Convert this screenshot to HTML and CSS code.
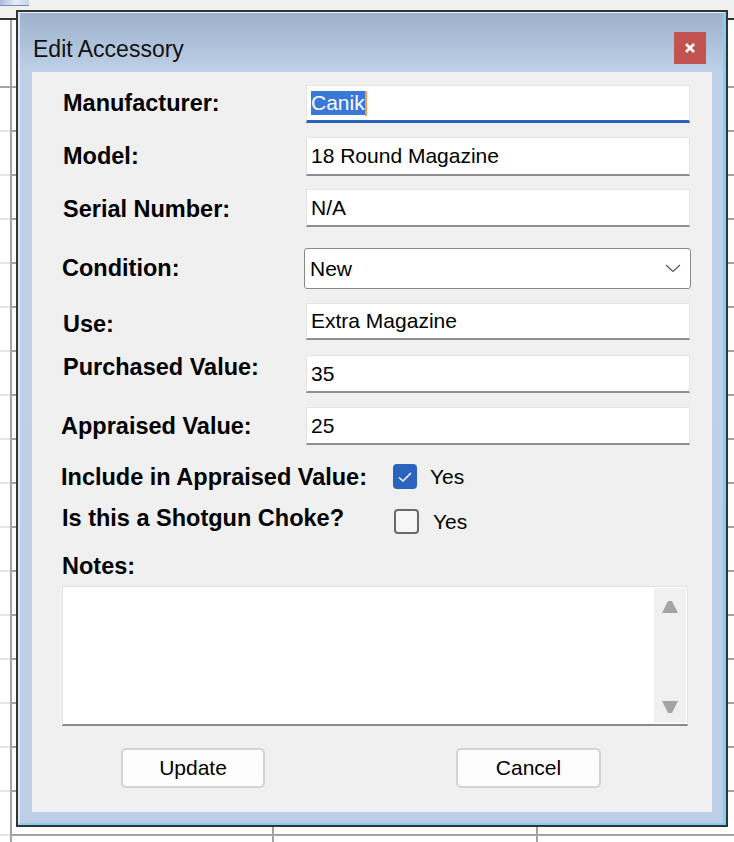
FILE: index.html
```html
<!DOCTYPE html>
<html lang="en">
<head>
    <meta charset="UTF-8">
    <meta name="viewport" content="width=device-width, initial-scale=1.0">
    <title>Edit Accessory</title>
    <link rel="stylesheet" href="styles.css">
</head>
<body>
    <div class="toolbar"><span class="toolbar-icon"></span></div>

    <!-- grid of the accessories list behind the dialog -->
    <div class="sheet">
        <div class="header-row"></div>
        <div class="rows"></div>
    </div>

    <div class="window">
        <div class="frame">
            <div class="titlebar">
                <span class="title">Edit Accessory</span>
                <button class="close" title="Close">
                    <svg width="10" height="10" viewBox="0 0 10 10">
                        <path d="M1 1 L9 9 M9 1 L1 9" stroke="#fff" stroke-width="2.6" fill="none"/>
                    </svg>
                </button>
            </div>

            <div class="client">
                <div class="row r1">
                    <label class="label">Manufacturer:</label>
                    <div class="field focused"><span class="selected">Canik</span><span class="caret"></span></div>
                </div>
                <div class="row r2">
                    <label class="label">Model:</label>
                    <div class="field tall">18 Round Magazine</div>
                </div>
                <div class="row r3">
                    <label class="label">Serial Number:</label>
                    <div class="field">N/A</div>
                </div>
                <div class="row r4">
                    <label class="label">Condition:</label>
                    <div class="combo">
                        <span>New</span>
                        <svg width="16" height="9" viewBox="0 0 16 9">
                            <polyline points="1,1 8,7.5 15,1" stroke="#5a5a5a" stroke-width="1.2" fill="none"/>
                        </svg>
                    </div>
                </div>
                <div class="row r5">
                    <label class="label">Use:</label>
                    <div class="field short">Extra Magazine</div>
                </div>
                <div class="row r6">
                    <label class="label">Purchased Value:</label>
                    <div class="field">35</div>
                </div>
                <div class="row r7">
                    <label class="label">Appraised Value:</label>
                    <div class="field">25</div>
                </div>

                <div class="row check-row r8">
                    <label class="label">Include in Appraised Value:</label>
                    <span class="box checked">
                        <svg width="24" height="25" viewBox="0 0 24 25">
                            <polyline points="6,13.5 10,17 18,9" stroke="#fff" stroke-width="1.6" fill="none"/>
                        </svg>
                    </span>
                    <span class="yes">Yes</span>
                </div>
                <div class="row check-row r9">
                    <label class="label">Is this a Shotgun Choke?</label>
                    <span class="box"></span>
                    <span class="yes">Yes</span>
                </div>

                <label class="label notes-label">Notes:</label>
                <div class="notes">
                    <div class="scroll">
                        <svg width="16" height="12" viewBox="0 0 16 12"><path d="M6 0 H10 L16 12 H0 Z" fill="#a4a4a4"/></svg>
                        <svg width="16" height="12" viewBox="0 0 16 12"><path d="M0 0 H16 L10 12 H6 Z" fill="#a4a4a4"/></svg>
                    </div>
                </div>

                <div class="buttons">
                    <button class="btn">Update</button>
                    <button class="btn cancel">Cancel</button>
                </div>
            </div>
        </div>
    </div>
</body>
</html>
```

FILE: styles.css
```css
* {
    box-sizing: border-box;
}
body {
    margin: 0;
    width: 734px;
    height: 842px;
    overflow: hidden;
    position: relative;
    display: flex;
    flex-direction: column;
    font-family: "Liberation Sans", Arial, sans-serif;
    color: #000;
    background: #fff;
}

/* app background */
.toolbar {
    height: 20px;
    flex: none;
    background: #f0f0f0;
    border-bottom: 2px solid #333;
}
.toolbar-icon {
    display: block;
    width: 29px;
    height: 6px;
    background: linear-gradient(to right, #a9bedb, #e6edf6 55%, #c5d4e8);
    border-bottom: 1px solid #6f8fc2;
}
.sheet {
    flex: 1;
    display: flex;
    flex-direction: column;
    background: linear-gradient(to right,
        transparent 10px, #a3a3a3 10px 12px,
        transparent 12px 272px, #a3a3a3 272px 274px,
        transparent 274px 536px, #a3a3a3 536px 538px,
        transparent 538px);
}
.header-row {
    height: 68px;
    flex: none;
    border-bottom: 2px solid #a3a3a3;
}
.rows {
    flex: 1;
    background:
        linear-gradient(transparent 42px, #e3e3e3 42px) 0 0 / 10px 44px repeat-y,
        linear-gradient(transparent 42px, #a3a3a3 42px) 0 0 / 100% 44px repeat-y;
}

/* dialog window */
.window {
    position: absolute;
    left: 16px;
    top: 10px;
    width: 712px;
    height: 817px;
    border: 2px solid #333;
}
.frame {
    height: 100%;
    display: flex;
    flex-direction: column;
    border-top: 1px solid #e9eff7;
    border-left: 2px solid #dfe7f2;
    border-right: 3px solid #80d0f0;
    border-bottom: 2px solid #80d0f0;
    padding: 0 11px 11px 12px;
    background: linear-gradient(#9cb1cc, #bfd1e8 60px, #bccfe6);
}
.titlebar {
    height: 59px;
    flex: none;
    display: flex;
    align-items: flex-start;
    padding-right: 6px;
}
.title {
    margin: 23px 0 0 1px;
    font-size: 23px;
    line-height: 26px;
    color: #111;
}
.close {
    margin: 19px 0 0 auto;
    width: 32px;
    height: 32px;
    padding: 0;
    border: none;
    background: #c25350;
    display: flex;
    align-items: center;
    justify-content: center;
}
.client {
    flex: 1;
    background: #f0f0f0;
    padding: 13px 0 0 31px;
}

/* form rows */
.row {
    display: flex;
    align-items: flex-start;
}
.label {
    display: block;
    width: 243px;
    flex: none;
    font-weight: bold;
    font-size: 23.5px;
    line-height: 26px;
}
.field {
    width: 384px;
    height: 38px;
    display: flex;
    align-items: center;
    padding: 0 4px;
    background: #fff;
    border: 1px solid #e4e4e4;
    border-bottom: 2px solid #8f8f8f;
    font-size: 21px;
}
.field.tall {
    height: 39px;
}
.field.short {
    height: 37px;
}
.field.focused {
    border-bottom: 3px solid #2a63b9;
}
.selected {
    background: #3a78d8;
    color: #fff;
}
.caret {
    display: inline-block;
    width: 2px;
    height: 25px;
    background: #f29a48;
}
.combo {
    width: 387px;
    height: 41px;
    margin-left: -1px;
    display: flex;
    align-items: center;
    justify-content: space-between;
    padding: 0 9px 0 5px;
    background: #fff;
    border: 1px solid #8a8a8a;
    border-radius: 3px;
    font-size: 21px;
}

.r1 .label { margin-top: 5px; }
.r2 { margin-top: 14px; }
.r2 .label { margin-top: 6px; }
.r3 { margin-top: 13px; }
.r3 .label { margin-top: 7px; }
.r4 { margin-top: 21px; }
.r4 .label { margin-top: 7px; margin-left: -1px; }
.r5 { margin-top: 14px; }
.r5 .label { margin-top: 8px; }
.r6 { margin-top: 15px; }
.r6 .label { margin-top: -1px; }
.r7 { margin-top: 14px; }
.r7 .label { margin-top: 6px; margin-left: -2px; margin-right: 2px; }

/* checkboxes */
.check-row .label {
    width: 330px;
}
.r8 { margin-top: 19px; }
.r8 .label { margin-top: 0; margin-left: -2px; margin-right: 2px; }
.r9 { margin-top: 19px; }
.r9 .label { margin-top: -4px; margin-left: -1px; margin-right: 1px; }
.box {
    display: block;
    flex: none;
    width: 24px;
    height: 25px;
    border-radius: 4px;
}
.box.checked {
    background: #2c63be;
}
.r9 .box {
    width: 25px;
    margin-left: 1px;
    border: 2px solid #6a6a6a;
    background: #f6f6f6;
}
.yes {
    margin: 1px 0 0 13px;
    font-size: 21px;
    line-height: 24px;
}
.r9 .yes {
    margin-left: 14px;
}

/* notes */
.notes-label {
    margin: 19px 0 0 -1px;
}
.notes {
    width: 626px;
    height: 140px;
    margin: 7px 0 0 -1px;
    display: flex;
    justify-content: flex-end;
    padding: 1px 1px 1px 0;
    background: #fff;
    border: 1px solid #e2e2e2;
    border-bottom: 2px solid #8a8a8a;
}
.scroll {
    width: 32px;
    display: flex;
    flex-direction: column;
    justify-content: space-between;
    align-items: center;
    padding: 13px 0 10px;
    background: #f0f0f0;
}

/* buttons */
.buttons {
    display: flex;
    gap: 191px;
    margin: 22px 0 0 58px;
}
.btn {
    width: 144px;
    height: 40px;
    padding: 0;
    border: 2px solid #d3d3d3;
    border-radius: 5px;
    background: #fdfdfd;
    font-family: "Liberation Sans", Arial, sans-serif;
    font-size: 21px;
    color: #000;
}
.btn.cancel {
    width: 145px;
}
```
